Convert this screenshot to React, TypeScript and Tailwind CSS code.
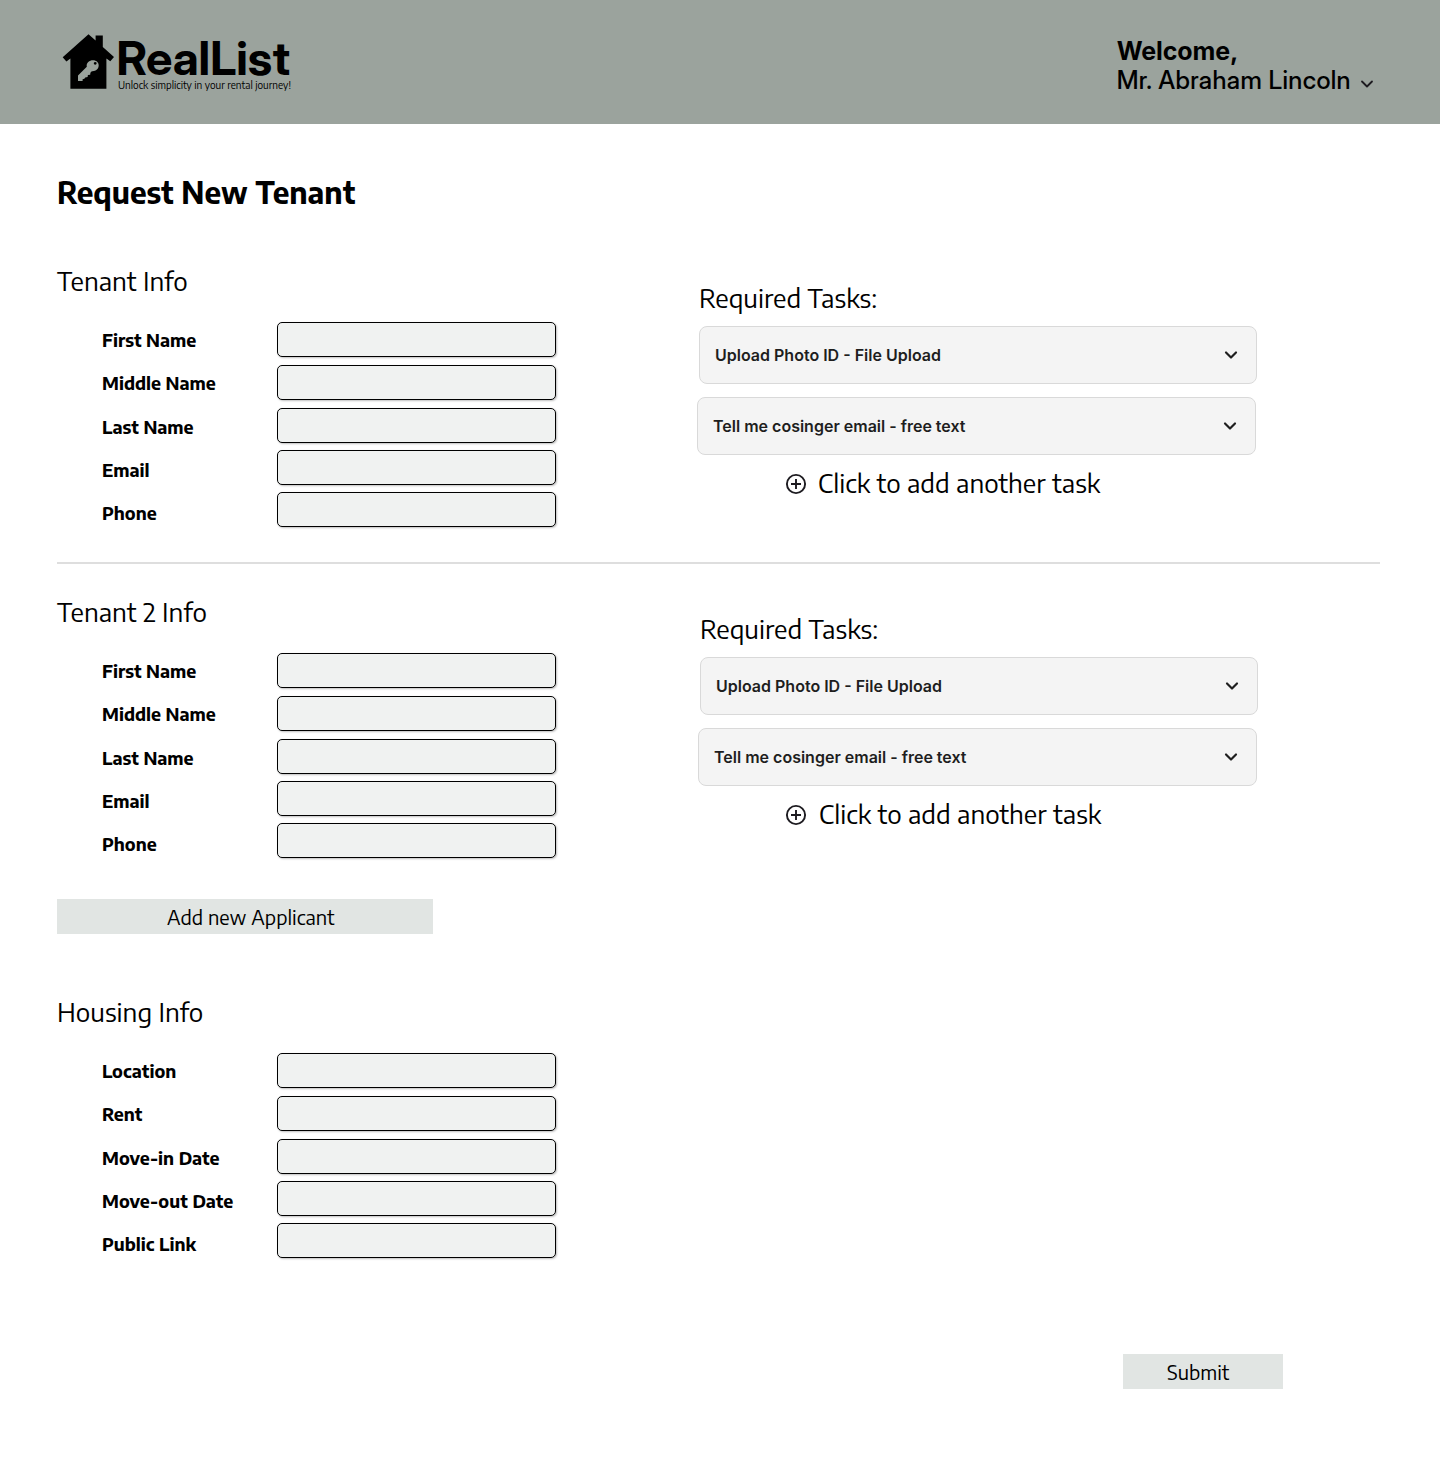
const heading = "relative -top-px text-[26px] leading-10 font-normal whitespace-nowrap";

function Chevron({ className = "" }: { className?: string }) {
  return (
    <svg viewBox="0 0 24 24" className={className} fill="none" stroke="currentColor" strokeLinecap="round" strokeLinejoin="round">
      <path d="M6 9l6 6 6-6" />
    </svg>
  );
}

function House() {
  return (
    <svg viewBox="0 0 52 56" className="h-14 w-[52px] shrink-0">
      <path
        d="M26.5 0.2 L33.6 6.6 V1.6 H40.8 V13 L52 23 L48.3 27.3 L44.4 24.4 V54.8 H8.4 V24.6 L4.4 27.5 L0.7 23.2 Z"
        fill="#000"
      />
      <path
        fillRule="evenodd"
        d="M16 41.6 L24.8 32.8 C24 28.6 27.4 26.2 31 26.2 C34.4 26.2 36.7 28.4 36.7 31.3 C36.7 35 33.6 37.6 29.8 37.2 L28.4 38.8 L28.2 40.7 L25.9 41 L25.6 43.1 L23.2 43.4 L22.4 44.8 L20.6 45.2 L20.6 47 H16 Z M33.2 27.9 a1.4 1.4 0 1 0 0.01 0 Z"
        fill="#9ba39d"
      />
    </svg>
  );
}

function Fields({ labels }: { labels: string[] }) {
  return (
    <div className="mt-5 ml-[45px] flex">
      <div className="flex w-[175px] flex-col text-[18px] leading-[35px] font-bold">
        <span className="h-[43px]">{labels[0]}</span>
        <span className="h-11">{labels[1]}</span>
        <span className="h-[43px]">{labels[2]}</span>
        <span className="h-[43px]">{labels[3]}</span>
        <span className="h-[35px]">{labels[4]}</span>
      </div>
      <div className="flex w-[279px] flex-col">
        <Field className="mb-2" label={labels[0]} />
        <Field className="mb-2" label={labels[1]} />
        <Field className="mb-[7px]" label={labels[2]} />
        <Field className="mb-[7px]" label={labels[3]} />
        <Field label={labels[4]} />
      </div>
    </div>
  );
}

function Field({ label, className = "" }: { label: string; className?: string }) {
  return (
    <input
      aria-label={label}
      className={`h-[35px] w-full rounded-[5px] border border-black bg-[#f0f2f1] px-3 shadow-[1px_1px_2px_rgba(0,0,0,0.25)] ${className}`}
    />
  );
}

function Task({ text, className = "" }: { text: string; className?: string }) {
  return (
    <button
      className={`flex h-[58px] items-center justify-between rounded-lg border border-[#d9d9d9] bg-[#f4f4f4] pr-[15px] pl-[15px] font-[Inter] text-base font-semibold text-[#1e1e1e] ${className}`}
    >
      {text}
      <Chevron className="size-5 stroke-[2.6]" />
    </button>
  );
}

function Tenant({ title, second = false }: { title: string; second?: boolean }) {
  return (
    <section className="flex h-[265px]">
      <div className="w-[642px]">
        <h2 className={heading}>{title}</h2>
        <Fields labels={["First Name", "Middle Name", "Last Name", "Email", "Phone"]} />
      </div>
      <div className={`flex flex-col pt-[17px] ${second ? "pl-px" : ""}`}>
        <h2 className={heading}>Required Tasks:</h2>
        <Task text="Upload Photo ID - File Upload" className="mt-[7px] w-[558px]" />
        <Task text="Tell me cosinger email - free text" className="mt-[13px] -ml-0.5 w-[559px]" />
        <button className={`mt-[9px] flex items-center ${second ? "ml-[85px] gap-[12px]" : "ml-[86px] gap-[11px]"}`}>
          <svg viewBox="0 0 22 22" className="size-[22px]" fill="none" stroke="#1d1b20" strokeWidth="1.9">
            <circle cx="11" cy="11" r="9.1" />
            <path d="M11 6v10M6 11h10" />
          </svg>
          <span className={heading}>Click to add another task</span>
        </button>
      </div>
    </section>
  );
}

export default function App() {
  return (
    <div className="min-h-[1484px] w-[1440px] bg-white font-['Encode_Sans','Noto_Sans',sans-serif] text-black">
      <header className="flex h-[124px] items-start justify-between bg-[#9ba39d] pr-[63px] pl-[62px]">
        <div className="flex pt-[34px]">
          <House />
          <div className="ml-px flex flex-col">
            <span className="ml-[1.5px] h-[43px] font-['Inter_Display',Inter,sans-serif] text-[47px] leading-[48px] font-bold">RealList</span>
            <span className="ml-[3px] text-[10px] leading-4 whitespace-nowrap">Unlock simplicity in your rental journey!</span>
          </div>
        </div>
        <div className="flex items-end pt-[37px] leading-[29px]">
          <div>
            <p className="font-[Inter] text-[25px] leading-[29px] font-bold tracking-[-0.1px]">Welcome,</p>
            <p className="font-['Inter_Display',Inter,sans-serif] text-[25px] leading-[29px] font-medium tracking-[0.38px]">
              Mr. Abraham Lincoln
            </p>
          </div>
          <Chevron className="mb-px ml-1.5 size-5 stroke-[2.2] text-[#1d1b20]" />
        </div>
      </header>
      <main className="pl-[57px]">
        <h1 className="pt-12 text-[30px] leading-10 font-bold">Request New Tenant</h1>
        <div className="pt-[50px]">
          <Tenant title="Tenant Info" />
        </div>
        <hr className="mt-[35px] w-[1323px] border-t-2 border-[#dedede]" />
        <div className="pt-[29px]">
          <Tenant title="Tenant 2 Info" second />
        </div>
        <button className="mt-[41px] block h-[35px] w-[376px] bg-[#e1e5e3] pt-px pl-[110px] text-left text-[20px]">
          Add new Applicant
        </button>
        <section className="pt-[59px]">
          <h2 className={heading}>Housing Info</h2>
          <Fields labels={["Location", "Rent", "Move-in Date", "Move-out Date", "Public Link"]} />
        </section>
        <button className="mt-[93px] ml-[1066px] block h-[35px] w-40 bg-[#e1e5e3] pt-px pl-11 text-left text-[20px]">
          Submit
        </button>
      </main>
    </div>
  );
}
